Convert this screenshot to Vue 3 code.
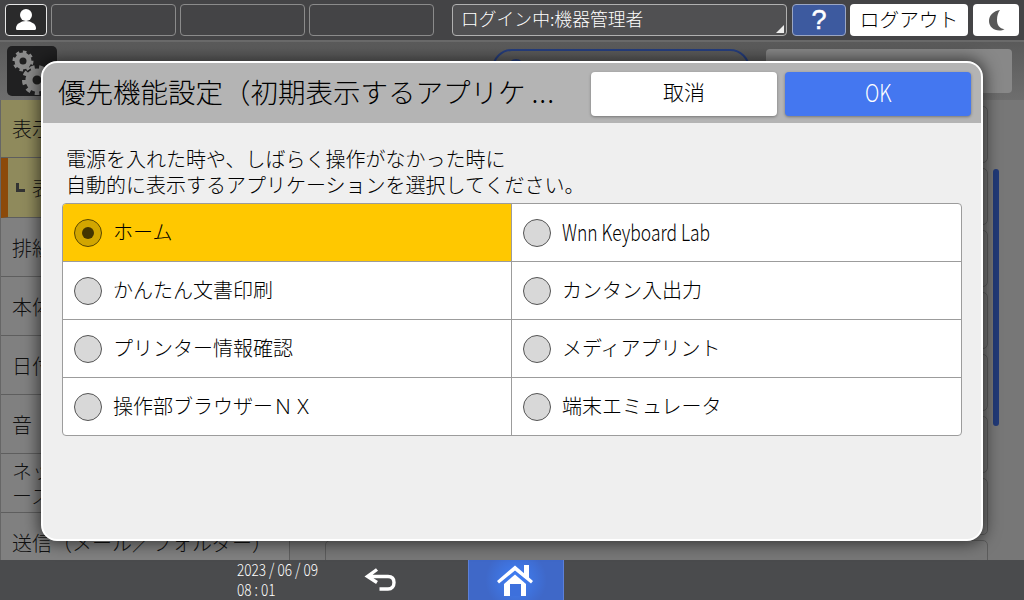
<template>
  <div class="screen">
    <header class="topbar">
      <button type="button" class="top-btn user-btn">
        <svg width="28" height="26" viewBox="0 0 28 26">
          <circle cx="14" cy="8" r="6" fill="#fff" />
          <path d="M14 14c-3 0-5 .8-7.500 2.600C4.800 18 4 19.500 4 21.500c0 1 .6 1.500 1.500 1.500h17c1 0 1.500-.6 1.500-1.500 0-2-.8-3.500-2.500-4.900C19 14.800 17 14 14 14z" fill="#fff" />
        </svg>
      </button>
      <div class="top-btn blank"></div>
      <div class="top-btn blank"></div>
      <div class="top-btn blank"></div>
      <div class="top-btn login-box">
        <span>ログイン中:機器管理者</span>
        <i class="corner"></i>
      </div>
      <button type="button" class="top-btn help-btn">?</button>
      <button type="button" class="top-btn logout-btn">ログアウト</button>
      <button type="button" class="top-btn moon-btn">
        <svg width="26" height="28" viewBox="0 0 26 28">
          <path d="M17 4C10.500 5 6 9.500 6 15c0 5.500 4.500 9.500 10.500 9.500 2 0 3.500-.4 5-1.200-5-1-7.500-4.300-7.500-9.300 0-4 1-7.500 3-10z" fill="#585858" />
        </svg>
      </button>
    </header>

    <main class="page">
      <div class="page-head">
        <div class="gear-tile">
          <svg width="50" height="50" viewBox="0 0 50 50">
            <g fill="none" stroke="#8a8a8a">
              <circle cx="16" cy="15" r="6" stroke-width="5" />
              <circle cx="16" cy="15" r="9" stroke-width="3" stroke-dasharray="3.500 3.500" />
              <circle cx="30" cy="34" r="8" stroke-width="7" />
              <circle cx="30" cy="34" r="13" stroke-width="4" stroke-dasharray="4.500 4.500" />
            </g>
          </svg>
        </div>
        <span class="page-title">本体設定</span>
        <div class="search-pill"><i class="search-dot"></i></div>
        <div class="head-btn"></div>
      </div>
      <div class="page-body">
        <nav class="side">
          <div class="side-row current">表示</div>
          <div class="side-row sub"><i class="sub-mark"></i>表示設定</div>
          <div v-for="item in sideItems" :key="item" class="side-row">{{ item }}</div>
        </nav>
        <div class="content">
          <div class="setting-list">
            <div v-for="n in 8" :key="n" class="setting"></div>
          </div>
          <div class="scroll-track"><div class="scroll-thumb"></div></div>
        </div>
      </div>

      <section class="dialog">
        <div class="dialog-head">
          <h1>優先機能設定（初期表示するアプリケ<span class="dots">...</span></h1>
          <button type="button" class="act cancel">取消</button>
          <button type="button" class="act ok"><span class="narrow">OK</span></button>
        </div>
        <div class="dialog-body">
          <p>電源を入れた時や、しばらく操作がなかった時に<br />自動的に表示するアプリケーションを選択してください。</p>
          <div class="options">
            <div
              v-for="opt in options"
              :key="opt.label"
              :class="['option', { selected: opt.label === selected }]"
            >
              <span class="radio"></span>
              <span :class="['label', { narrow: opt.latin }]">{{ opt.label }}</span>
            </div>
          </div>
        </div>
      </section>
    </main>

    <footer class="bottom">
      <div class="clock">
        <span class="narrow">2023 / 06 / 09</span>
        <span class="narrow">08 : 01</span>
      </div>
      <svg class="back" width="34" height="28" viewBox="0 0 34 28">
        <path d="M13 3.500 3.500 10.500 13 16.500M4.500 10.500H24c4 0 6 2.400 6 6s-2 6.500-6 6.500h-8.500" fill="none" stroke="#fff" stroke-width="3.400" stroke-linejoin="miter" />
      </svg>
      <button type="button" class="home-btn">
        <svg width="52" height="40" viewBox="0 0 52 40">
          <path d="M7 21 25 5.500l9 7.700V5h5v12.500L43 21l-2 2.500L25 10.500 9 23.500z" fill="#fff" />
          <path d="M14 24 25 14.500 36 24v12H14z" fill="#fff" />
          <path d="M20 24h11v12H20z" fill="#3d70dc" />
        </svg>
      </button>
    </footer>
  </div>
</template>

<script setup>
const sideItems = ['排紙', '本体', '日付', '音', 'ネットワーク/インターフェース', '送信（メール／フォルダー）']

const selected = 'ホーム'

const options = [
  { label: 'ホーム' },
  { label: 'Wnn Keyboard Lab', latin: true },
  { label: 'かんたん文書印刷' },
  { label: 'カンタン入出力' },
  { label: 'プリンター情報確認' },
  { label: 'メディアプリント' },
  { label: '操作部ブラウザーＮＸ' },
  { label: '端末エミュレータ' }
]
</script>

<style scoped>
.screen {
  position: relative;
  display: flex;
  flex-direction: column;
  width: 1024px;
  height: 600px;
  overflow: hidden;
  font-family: "Noto Sans CJK JP", "Noto Sans", sans-serif;
  font-weight: 300;
  color: #000;
}

.topbar {
  flex: 0 0 42px;
  box-sizing: border-box;
  display: flex;
  align-items: flex-start;
  padding: 4px 5px 0;
  background: #444446;
  border-bottom: 2px solid #6a6a6a;
}

.top-btn {
  box-sizing: border-box;
  height: 32px;
  margin: 0;
  padding: 0;
  border: 1px solid #8b8b8b;
  border-radius: 4px;
  background: transparent;
  font: inherit;
}

.user-btn {
  width: 42px;
  margin-right: 4px;
  display: grid;
  place-items: center;
  background: #2a2a2b;
  border-color: #e6e6e6;
}

.blank {
  width: 125px;
  margin-right: 4px;
}

.login-box {
  position: relative;
  width: 335px;
  margin-left: 14px;
  margin-right: 5px;
  padding-left: 8px;
  color: #fff;
  font-size: 17.800px;
  line-height: 27px;
  background: #505052;
  border-color: #b0b0b0;
}

.corner {
  position: absolute;
  right: 2px;
  bottom: 2px;
  border-style: solid;
  border-width: 0 0 8px 8px;
  border-color: transparent transparent #eee transparent;
}

.help-btn {
  width: 54px;
  margin-right: 4px;
  padding-bottom: 2px;
  color: #fff;
  font-family: "Liberation Sans", sans-serif;
  font-size: 27px;
  font-weight: 400;
  -webkit-text-stroke: 0.5px #fff;
  background: #3d5a9f;
  border-color: #9aa6c4;
}

.logout-btn {
  width: 118px;
  margin-right: 5px;
  padding-bottom: 3px;
  border: 0;
  font-size: 19.700px;
  color: #000;
  background: #fff;
}

.moon-btn {
  width: 46px;
  display: grid;
  place-items: center;
  border: 0;
  background: #fff;
}

.page {
  position: relative;
  flex: 1;
  display: flex;
  flex-direction: column;
  min-height: 0;
  background: #777;
}

.page-head {
  flex: 0 0 58px;
  box-sizing: border-box;
  display: flex;
  align-items: flex-start;
  padding: 4px 12px 0 7px;
  background: linear-gradient(#5a5a5a, #6e6e6e);
}

.gear-tile {
  width: 50px;
  height: 50px;
  border-radius: 5px;
  background: #202021;
  flex: none;
  overflow: hidden;
}

.page-title {
  width: 435px;
  padding: 11px 0 0 93px;
  box-sizing: border-box;
  font-size: 22px;
  flex: none;
}

.search-pill {
  position: relative;
  box-sizing: border-box;
  width: 258px;
  height: 46px;
  margin: 3px 16px 0 0;
  border: 2px solid #263f80;
  border-radius: 20px;
  flex: none;
}

.search-dot {
  position: absolute;
  left: 14px;
  top: 8px;
  width: 16px;
  height: 16px;
  box-sizing: border-box;
  border: 2px solid #263f80;
  border-radius: 50%;
}

.head-btn {
  width: 246px;
  height: 44px;
  margin-top: 3px;
  border-radius: 4px;
  background: #888;
  flex: none;
}

.page-body {
  flex: 1;
  display: flex;
  min-height: 0;
  overflow: hidden;
}

.side {
  flex: 0 0 290px;
  box-sizing: border-box;
  background: #808080;
  border-left: 1px solid #666;
  border-right: 1px solid #5e5e5e;
  overflow: hidden;
}

.side-row {
  box-sizing: border-box;
  display: flex;
  align-items: center;
  height: 59px;
  padding: 0 11px;
  font-size: 20px;
  line-height: 25px;
  color: #111;
  border-bottom: 1px solid #5e5e5e;
}

.side-row.current {
  height: 58px;
  background: #8f8a5c;
}

.side-row.sub {
  background: #8f8a5c;
  border-left: 7px solid #8c4a0a;
  padding-left: 8px;
  height: 60px;
}

.sub-mark {
  width: 9px;
  height: 9px;
  box-sizing: border-box;
  margin-right: 7px;
  border-left: 3px solid #333;
  border-bottom: 3px solid #333;
}

.content {
  flex: 1;
  display: flex;
  padding: 6px 25px 0 35px;
  gap: 5px;
  min-width: 0;
}

.setting-list {
  flex: 1;
  display: flex;
  flex-direction: column;
  gap: 5px;
}

.setting {
  flex: 0 0 57px;
  box-sizing: border-box;
  border: 1px solid #5c5c5c;
  border-radius: 5px;
}

.scroll-track {
  flex: 0 0 6px;
  padding-top: 63px;
}

.scroll-thumb {
  height: 257px;
  border-radius: 3px;
  background: #213a78;
}

.dialog {
  position: absolute;
  left: 41px;
  top: 19px;
  box-sizing: border-box;
  width: 942px;
  height: 480px;
  border: 2px solid #fff;
  border-radius: 16px;
  background: #efefef;
  box-shadow: 0 0 16px 2px rgba(0, 0, 0, 0.6);
  overflow: hidden;
}

.dialog-head {
  box-sizing: border-box;
  display: flex;
  align-items: center;
  height: 60px;
  padding: 0 10px 0 15px;
  background: #b4b4b4;
}

.dialog-head h1 {
  flex: 1;
  margin: 0;
  padding-bottom: 5px;
  font-size: 27.500px;
  font-weight: 300;
  white-space: nowrap;
  color: #000;
}

.dots {
  margin-left: 6px;
  letter-spacing: 1px;
}

.act {
  width: 186px;
  height: 44px;
  margin: 2px 0 0 8px;
  padding: 0 0 6px;
  border: 0;
  border-radius: 4px;
  font: inherit;
  font-size: 21px;
  box-shadow: 0 1px 3px rgba(0, 0, 0, 0.35);
}

.cancel {
  background: #fff;
  color: #000;
}

.ok {
  background: #4477f0;
  color: #fff;
  font-size: 24px;
}

.dialog-body {
  padding: 23px 19px 0;
}

.dialog-body p {
  margin: 0 0 5px 4px;
  font-size: 20px;
  line-height: 26px;
  color: #000;
}

.options {
  display: grid;
  grid-template-columns: 449px 450px;
  border: 1px solid #9c9c9c;
  border-radius: 4px;
  background: #fff;
  overflow: hidden;
}

.option {
  box-sizing: border-box;
  display: flex;
  align-items: center;
  gap: 11px;
  height: 58px;
  padding-left: 11px;
  font-size: 20px;
  color: #000;
  border-bottom: 1px solid #9c9c9c;
}

.option:nth-child(odd) {
  border-right: 1px solid #9c9c9c;
}

.option:nth-last-child(-n + 2) {
  border-bottom: 0;
  height: 57px;
}

.option.selected {
  background: #ffc800;
}

.label {
  position: relative;
  top: -1px;
}

.label.narrow {
  top: -2px;
  font-size: 22.500px;
  transform: scaleX(0.775);
}

.radio {
  position: relative;
  box-sizing: border-box;
  width: 28px;
  height: 28px;
  flex: none;
  border: 1px solid #555;
  border-radius: 50%;
  background: #d8d8d8;
}

.selected .radio {
  background: #d2a600;
  border-color: #5a4800;
}

.selected .radio::after {
  content: "";
  position: absolute;
  left: 7px;
  top: 7px;
  width: 12px;
  height: 12px;
  border-radius: 50%;
  background: #433500;
}

.narrow {
  display: inline-block;
  transform: scaleX(0.82);
  transform-origin: left center;
}

.ok .narrow {
  transform-origin: center;
}

.bottom {
  flex: 0 0 40px;
  display: flex;
  align-items: center;
  background: #4a4b4d;
}

.clock {
  display: flex;
  flex-direction: column;
  width: 127px;
  margin-left: 237px;
  color: #fff;
  font-size: 17px;
  line-height: 20px;
  white-space: nowrap;
  position: relative;
  top: -1px;
}

.clock .narrow {
  transform: scaleX(0.8);
}

.back {
  flex: none;
}

.home-btn {
  width: 96px;
  height: 40px;
  margin-left: 70px;
  padding: 0;
  display: grid;
  place-items: center;
  border: 0;
  border-left: 1px solid #5c80d8;
  border-right: 1px solid #5c80d8;
  background: radial-gradient(circle at center, #3f7cf0 10%, #3f68c8 60%);
}
</style>

<style>
html,
body {
  margin: 0;
  background: #444;
}
</style>
